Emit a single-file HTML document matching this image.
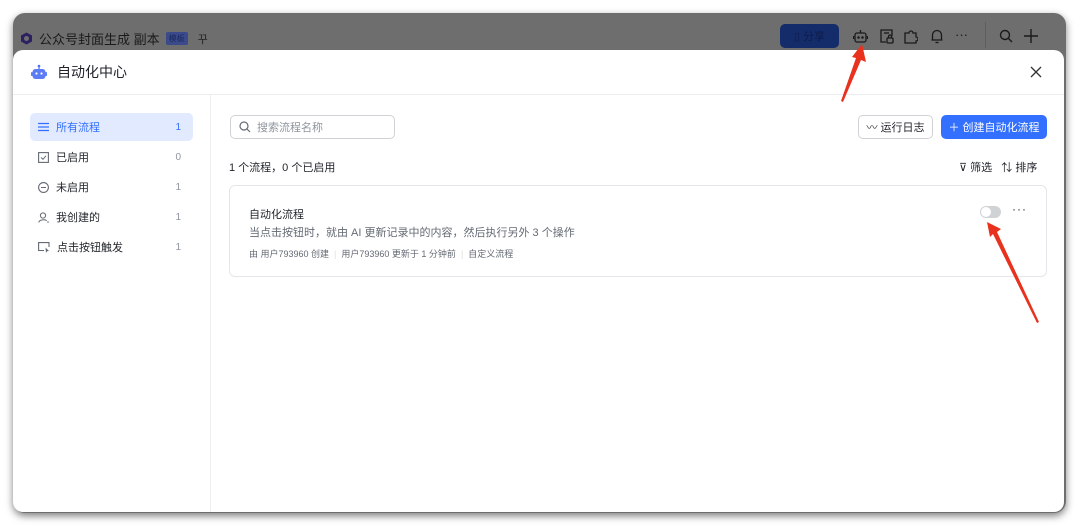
<!DOCTYPE html><html><head><meta charset="utf-8"><style>
*{box-sizing:border-box;margin:0;padding:0}
body{width:1080px;height:526px;background:#fff;position:relative;overflow:hidden;font-family:"Liberation Sans","Noto Sans CJK SC",sans-serif;color:#1f2329}
.win{position:absolute;left:13px;top:13px;width:1053px;height:500px;background:#6e6e6e;border-radius:12px;box-shadow:0 3px 8px rgba(0,0,0,.5)}
.top{position:absolute;left:20px;top:29px;font-size:13px;color:#1a1a1a;display:flex;align-items:center;gap:6px}
.modal{position:absolute;left:13px;top:50px;width:1051px;height:462px;background:#fff;border-radius:10px 10px 10px 10px}
.hdr{height:45px;border-bottom:1px solid #eceef0;display:flex;align-items:center;padding-left:17px;font-size:14px}
.side{position:absolute;left:0;top:45px;width:198px;bottom:0;border-right:1px solid #eceef0}
.item{position:absolute;left:17px;width:163px;height:28px;display:flex;align-items:center;padding-left:8px;font-size:11px;color:#1f2329}
.item .n{position:absolute;right:12px;color:#8f959e;font-size:10px}
.item svg{margin-right:7px}
.act{background:#e1eaff;color:#3370ff;border-radius:5px}
.act .n{color:#3370ff}
.btn{position:absolute;height:24px;border-radius:5px;font-size:11px;display:flex;align-items:center;justify-content:center}
.ti{position:absolute;top:29px}
</style></head><body>
<div class="win"></div>
<div class="top"><svg width="13" height="13" viewBox="0 0 13 13"><path d="M6.5 0.5L12 3.5V9.5L6.5 12.5L1 9.5V3.5Z" fill="#2c2060"/><circle cx="6.5" cy="6.5" r="2.5" fill="#6e6e6e"/></svg><span>公众号封面生成 副本</span><span style="background:#3a4a8a;color:#1c2a60;font-size:8px;padding:1px 3px;border-radius:2px">模板</span><span style="color:#222;font-size:11px;margin-left:4px">꾸</span></div>
<div class="btn" style="left:780px;top:24px;width:59px;background:#152c6a;color:#0d1c4c">▯ 分享</div>
<svg class="ti" style="left:853px" width="15" height="15" viewBox="0 0 15 15" fill="none" stroke="#1a1a1a" stroke-width="1.3"><path d="M7.5 1V4"/><rect x="2" y="4" width="11" height="9" rx="2"/><path d="M0.5 7V10M14.5 7V10"/><circle cx="5.5" cy="8.5" r=".6"/><circle cx="9.5" cy="8.5" r=".6"/></svg>
<svg class="ti" style="left:880px" width="14" height="15" viewBox="0 0 14 15" fill="none" stroke="#1a1a1a" stroke-width="1.3"><path d="M6 13H1V1H12V7"/><path d="M4 4H9"/><rect x="7" y="9" width="6" height="5" rx="1"/><path d="M8.5 9V7.5A1.5 1.5 0 0 1 11.5 7.5V9"/></svg>
<svg class="ti" style="left:904px" width="14" height="15" viewBox="0 0 14 15" fill="none" stroke="#1a1a1a" stroke-width="1.3"><path d="M1 4H5A2 2 0 0 1 9 4H12V8A2 2 0 0 1 12 12V14H1Z"/></svg>
<svg class="ti" style="left:930px" width="14" height="15" viewBox="0 0 14 15" fill="none" stroke="#1a1a1a" stroke-width="1.3"><path d="M2.5 11V6A4.5 4.5 0 0 1 11.5 6V11H1.5H12.5"/><path d="M5.5 13.5H8.5"/></svg>
<div style="position:absolute;left:955px;top:27px;font-size:13px;color:#1a1a1a">···</div>
<div style="position:absolute;left:985px;top:22px;width:1px;height:26px;background:#5e5e5e"></div>
<svg class="ti" style="left:999px" width="14" height="14" fill="none" stroke="#1a1a1a" stroke-width="1.4"><circle cx="6" cy="6" r="4.5"/><path d="M9.5 9.5L13 13"/></svg>
<svg class="ti" style="left:1024px" width="14" height="14" stroke="#1a1a1a" stroke-width="1.4"><path d="M7 0V14M0 7H14"/></svg>
<div class="modal">
 <div class="hdr"><svg width="18" height="18" viewBox="0 0 18 18"><circle cx="9" cy="3" r="1.3" fill="#4e6ef2"/><rect x="8.4" y="3" width="1.2" height="3" fill="#4e6ef2"/><rect x="2.5" y="6" width="13" height="10" rx="3" fill="#5b7cf5"/><rect x="1" y="9" width="1.6" height="4" rx=".8" fill="#5b7cf5"/><rect x="15.4" y="9" width="1.6" height="4" rx=".8" fill="#5b7cf5"/><circle cx="6.5" cy="10.5" r="1.1" fill="#fff"/><circle cx="11.5" cy="10.5" r="1.1" fill="#fff"/></svg><span style="margin-left:9px">自动化中心</span>
 <svg style="position:absolute;right:22px;top:16px" width="12" height="12" viewBox="0 0 12 12"><path d="M1 1L11 11M11 1L1 11" stroke="#333" stroke-width="1.3"/></svg></div>
 <div class="side">
  <div class="item act" style="top:18px"><svg width="11" height="10"><path d="M0 1.5H11M0 5H11M0 8.5H11" stroke="#3370ff" stroke-width="1.2"/></svg>所有流程<span class="n">1</span></div>
  <div class="item" style="top:48px"><svg width="11" height="11"><rect x=".6" y=".6" width="9.8" height="9.8" fill="none" stroke="#646a73" stroke-width="1.1"/><path d="M3 5.5L5 7.3L8 3.8" fill="none" stroke="#646a73"/></svg>已启用<span class="n">0</span></div>
  <div class="item" style="top:78px"><svg width="11" height="11"><circle cx="5.5" cy="5.5" r="4.9" fill="none" stroke="#646a73" stroke-width="1.1"/><path d="M3 5.5H8" stroke="#646a73"/></svg>未启用<span class="n">1</span></div>
  <div class="item" style="top:108px"><svg width="11" height="11"><circle cx="5" cy="3.5" r="2.6" fill="none" stroke="#646a73"/><path d="M0.8 10.5C1 7.5 8 7 8.5 9" fill="none" stroke="#646a73"/><circle cx="10" cy="10" r=".8" fill="#646a73"/></svg>我创建的<span class="n">1</span></div>
  <div class="item" style="top:138px"><svg width="12" height="11"><path d="M6 8.5H.6V.6H11V5" fill="none" stroke="#646a73" stroke-width="1.1"/><path d="M7.5 5.5L11 9L9 9.2L8 11Z" fill="#646a73"/></svg>点击按钮触发<span class="n">1</span></div>
 </div>
 <div style="position:absolute;left:217px;top:65px;width:165px;height:24px;border:1px solid #d0d3d6;border-radius:5px;font-size:11px;color:#8f959e;display:flex;align-items:center;padding-left:8px"><svg width="12" height="12" style="margin-right:6px"><circle cx="5" cy="5" r="4" fill="none" stroke="#646a73" stroke-width="1.2"/><path d="M8 8L11 11" stroke="#646a73" stroke-width="1.2"/></svg>搜索流程名称</div>
 <div class="btn" style="left:845px;top:65px;width:75px;border:1px solid #d0d3d6;color:#1f2329">〰 运行日志</div>
 <div class="btn" style="left:928px;top:65px;width:106px;background:#3370ff;color:#fff">＋ 创建自动化流程</div>
 <div style="position:absolute;left:216px;top:109px;font-size:11px">1 个流程，0 个已启用</div>
 <div style="position:absolute;left:946px;top:109px;font-size:11px">⊽ 筛选 &nbsp;&nbsp;⇅ 排序</div>
 <div style="position:absolute;left:216px;top:135px;width:818px;height:92px;border:1px solid #e4e6e9;border-radius:6px">
  <div style="position:absolute;left:19px;top:20px;font-size:11px">自动化流程</div>
  <div style="position:absolute;left:19px;top:38px;font-size:11px;color:#646a73">当点击按钮时，就由 AI 更新记录中的内容，然后执行另外 3 个操作</div>
  <div style="position:absolute;left:19px;top:61px;font-size:9px;color:#646a73">由 用户793960 创建 &nbsp;<span style="color:#ddd">|</span>&nbsp; 用户793960 更新于 1 分钟前 &nbsp;<span style="color:#ddd">|</span>&nbsp; 自定义流程</div>
  <div style="position:absolute;left:750px;top:20px;width:21px;height:12px;border-radius:6px;background:#d0d3d6"><div style="position:absolute;left:1px;top:1px;width:10px;height:10px;border-radius:5px;background:#fff"></div></div>
  <div style="position:absolute;left:782px;top:16px;font-size:12px;color:#333;letter-spacing:1px">···</div>
 </div>
</div>
<svg style="position:absolute;left:0;top:0" width="1080" height="526"><polygon points="862,44 866,62 861,60 843,102 841,101 856,58 852,57" fill="#e8321e"/><polygon points="987,222 1001,229 997,232 1039,322 1037,323 993,234 990,237" fill="#e8321e"/></svg>
</body></html>
